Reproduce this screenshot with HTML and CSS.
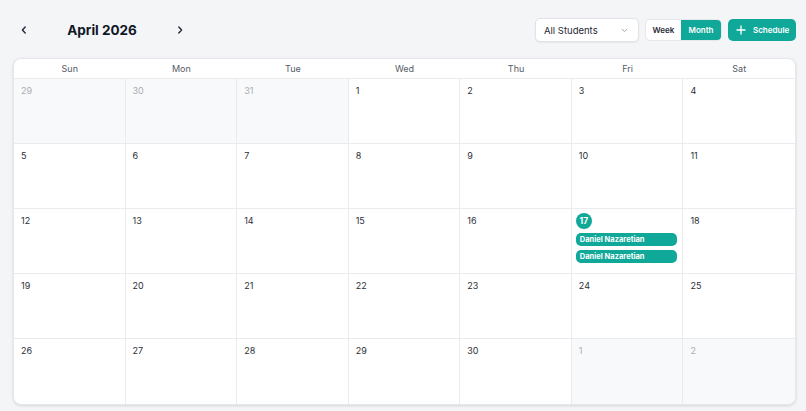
FILE: index.html
```html
<!DOCTYPE html>
<html lang="en">

<head>
    <meta charset="utf-8">
    <meta name="viewport" content="width=device-width, initial-scale=1.0">
    <title>Calendar</title>
    <link rel="stylesheet" href="styles.css">
</head>

<body>
    <div class="page">
        <div class="toolbar">
            <div class="nav">
                <button class="navButton" aria-label="previous">
                    <svg width="10" height="10" viewBox="0 0 10 10"><path d="M6.2 2 L3.4 5 L6.2 8" fill="none" stroke="#1f2937" stroke-width="1.4" stroke-linecap="round" stroke-linejoin="round"/></svg>
                </button>
                <h1 class="title">April 2026</h1>
                <button class="navButton" aria-label="next">
                    <svg width="10" height="10" viewBox="0 0 10 10"><path d="M3.8 2 L6.6 5 L3.8 8" fill="none" stroke="#1f2937" stroke-width="1.4" stroke-linecap="round" stroke-linejoin="round"/></svg>
                </button>
            </div>
            <div class="actions">
                <div class="select">
                    <span>All Students</span>
                    <svg width="9" height="9" viewBox="0 0 10 10"><path d="M2.5 3.8 L5 6.2 L7.5 3.8" fill="none" stroke="#9ca3af" stroke-width="1.1" stroke-linecap="round" stroke-linejoin="round"/></svg>
                </div>
                <div class="toggle">
                    <button class="toggleButton">Week</button>
                    <button class="toggleButton active">Month</button>
                </div>
                <button class="scheduleButton">
                    <svg width="10" height="10" viewBox="0 0 10 10"><path d="M5 1 V9 M1 5 H9" stroke="#fff" stroke-width="1.3" stroke-linecap="round"/></svg>
                    <span>Schedule</span>
                </button>
            </div>
        </div>

        <div class="calendar">
            <div class="dayName">Sun</div>
            <div class="dayName">Mon</div>
            <div class="dayName">Tue</div>
            <div class="dayName">Wed</div>
            <div class="dayName">Thu</div>
            <div class="dayName">Fri</div>
            <div class="dayName">Sat</div>

            <div class="cell outside"><span class="date">29</span></div>
            <div class="cell outside"><span class="date">30</span></div>
            <div class="cell outside"><span class="date">31</span></div>
            <div class="cell"><span class="date">1</span></div>
            <div class="cell"><span class="date">2</span></div>
            <div class="cell"><span class="date">3</span></div>
            <div class="cell"><span class="date">4</span></div>

            <div class="cell"><span class="date">5</span></div>
            <div class="cell"><span class="date">6</span></div>
            <div class="cell"><span class="date">7</span></div>
            <div class="cell"><span class="date">8</span></div>
            <div class="cell"><span class="date">9</span></div>
            <div class="cell"><span class="date">10</span></div>
            <div class="cell"><span class="date">11</span></div>

            <div class="cell"><span class="date">12</span></div>
            <div class="cell"><span class="date">13</span></div>
            <div class="cell"><span class="date">14</span></div>
            <div class="cell"><span class="date">15</span></div>
            <div class="cell"><span class="date">16</span></div>
            <div class="cell">
                <span class="date today">17</span>
                <div class="event">Daniel Nazaretian</div>
                <div class="event">Daniel Nazaretian</div>
            </div>
            <div class="cell"><span class="date">18</span></div>

            <div class="cell"><span class="date">19</span></div>
            <div class="cell"><span class="date">20</span></div>
            <div class="cell"><span class="date">21</span></div>
            <div class="cell"><span class="date">22</span></div>
            <div class="cell"><span class="date">23</span></div>
            <div class="cell"><span class="date">24</span></div>
            <div class="cell"><span class="date">25</span></div>

            <div class="cell lastRow"><span class="date">26</span></div>
            <div class="cell lastRow"><span class="date">27</span></div>
            <div class="cell lastRow"><span class="date">28</span></div>
            <div class="cell lastRow"><span class="date">29</span></div>
            <div class="cell lastRow"><span class="date">30</span></div>
            <div class="cell lastRow outside"><span class="date">1</span></div>
            <div class="cell lastRow outside"><span class="date">2</span></div>
        </div>
    </div>
</body>

</html>
```

FILE: styles.css
```css
html {
    height: 100%;
}

body {
    margin: 0;
    height: 100%;
    background: #f4f5f7;
    font-family: 'Inter', 'Noto Sans', sans-serif;
    color: #1f2937;
}

button {
    font-family: inherit;
    border: none;
    background: none;
    padding: 0;
    cursor: pointer;
}

.page {
    box-sizing: border-box;
    height: 100%;
    display: flex;
    flex-direction: column;
    padding: 18px 10px 6px 13px;
}

.toolbar {
    display: flex;
    justify-content: space-between;
    align-items: center;
    height: 24px;
    margin-bottom: 16px;
}

.nav {
    display: flex;
    align-items: center;
}

.navButton {
    width: 22px;
    height: 22px;
    display: flex;
    align-items: center;
    justify-content: center;
}

.title {
    margin: 0;
    min-width: 134px;
    text-align: center;
    font-size: 13.5px;
    font-weight: 700;
    color: #111827;
}

.actions {
    display: flex;
    align-items: center;
    gap: 6px;
}

.select {
    box-sizing: border-box;
    width: 104px;
    height: 24px;
    display: flex;
    align-items: center;
    justify-content: space-between;
    padding: 0 9px 0 8px;
    background: #fff;
    border: 1px solid #e1e3e7;
    border-radius: 5px;
    box-shadow: 0 1px 2px rgba(0, 0, 0, .06);
    font-size: 9.5px;
    color: #1f2937;
}

.toggle {
    display: flex;
    height: 22px;
    border: 1px solid #e5e7eb;
    border-radius: 5px;
    overflow: hidden;
    background: #fff;
    box-sizing: border-box;
}

.toggleButton {
    width: 35px;
    font-size: 8px;
    font-weight: 600;
    color: #1f2937;
}

.toggleButton.active {
    width: 40px;
    background: #10a898;
    color: #fff;
}

.scheduleButton {
    box-sizing: border-box;
    width: 68px;
    height: 22px;
    display: flex;
    align-items: center;
    gap: 7px;
    padding-left: 8px;
    background: #10a898;
    border-radius: 5px;
    color: #fff;
    font-size: 8px;
    font-weight: 600;
}

.calendar {
    flex: 1;
    display: grid;
    grid-template-columns: repeat(7, 1fr);
    grid-template-rows: 20px repeat(5, 1fr);
    background: #fff;
    border: 1px solid #e5e7eb;
    border-radius: 8px;
    box-shadow: 0 1px 3px rgba(0, 0, 0, .12);
    overflow: hidden;
}

.dayName {
    display: flex;
    align-items: center;
    justify-content: center;
    font-size: 9px;
    color: #555b65;
    border-bottom: 1px solid #eaebee;
}

.cell {
    display: flex;
    flex-direction: column;
    align-items: flex-start;
    gap: 4px;
    padding: 4px;
    border-right: 1px solid #eaebee;
    border-bottom: 1px solid #eaebee;
    min-width: 0;
}

.cell:nth-child(7n) {
    border-right: none;
}

.cell.lastRow {
    border-bottom: none;
}

.cell.outside {
    background: #f8f9fa;
}

.date {
    height: 16px;
    line-height: 16px;
    padding-left: 3px;
    font-size: 9px;
    color: #2b2f36;
}

.outside .date {
    color: #a9adb3;
}

.date.today {
    width: 16px;
    padding: 0;
    border-radius: 50%;
    background: #10a898;
    color: #fff;
    font-weight: 700;
    text-align: center;
    font-size: 8.5px;
}

.event {
    box-sizing: border-box;
    width: calc(100% - 1px);
    height: 13px;
    line-height: 13px;
    padding-left: 4px;
    background: #10a898;
    border-radius: 5px;
    color: #fff;
    font-size: 7.5px;
    font-weight: 700;
    white-space: nowrap;
    overflow: hidden;
}
```
